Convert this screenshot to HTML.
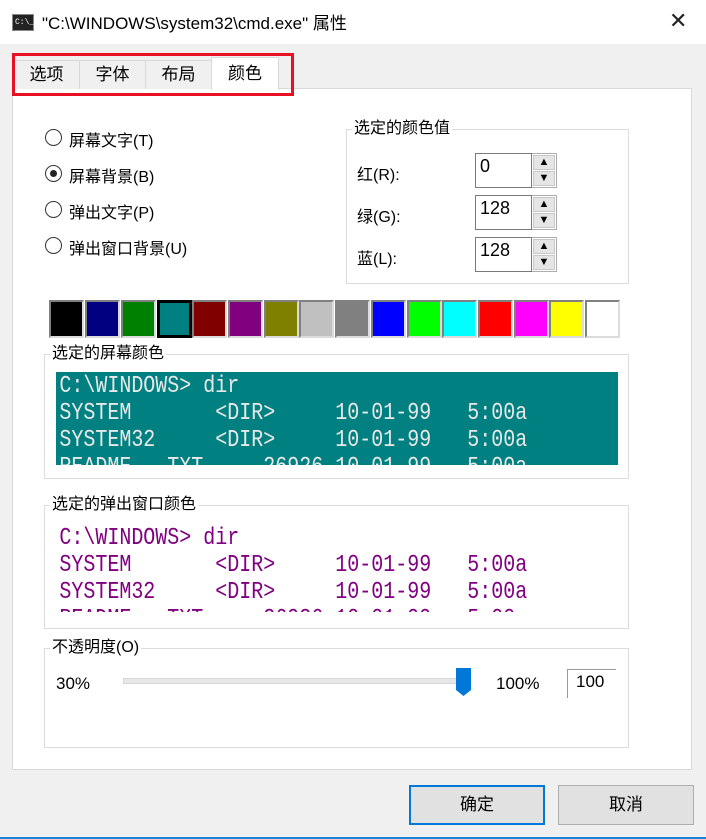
<!DOCTYPE html><html><head><meta charset="utf-8"><style>
*{margin:0;padding:0;box-sizing:border-box}
body{width:706px;height:839px;background:#f0f0f0;position:relative;overflow:hidden;font-family:"Liberation Sans","Noto Sans CJK SC",sans-serif;font-size:16px;color:#000}
.a{position:absolute}
.title{left:0;top:0;width:706px;height:44px;background:#fff}
.panel{left:12px;top:88px;width:680px;height:682px;background:#fff;border:1px solid #d9d9d9}
.tab{top:60px;height:29px;background:#f0f0f0;border:1px solid #d9d9d9;border-bottom:none;text-align:center;line-height:27px;font-size:17px}
.grp{border:1px solid #dcdcdc}
.gl{background:#fff;padding:0 2px;font-size:16px;line-height:20px}
.radio{width:17px;height:17px;border:1px solid #333;border-radius:50%;background:#fff}
.inp{width:57px;height:35px;border:1px solid #7a7a7a;background:#fff;font-size:18px;padding:2px 0 0 4px}
.sp{width:25px;height:35px;border:1px solid #adadad;border-left:none;background:#fff}
.sb{position:absolute;left:1px;width:22px;height:15px;background:#e5e5e5;border:1px solid #c8c8c8;font-size:11px;line-height:13px;text-align:center}
.cell{top:300px;width:35px;height:38px;border:2px solid;border-color:#808080 #dcdcdc #dcdcdc #808080}
.con{overflow:hidden}
.con div{font-family:"Liberation Mono",monospace;font-size:24px;line-height:27px;white-space:pre;transform:scaleX(0.833);transform-origin:0 0;padding-left:4px;margin-top:1px}
.btn{top:785px;width:136px;height:40px;background:#e1e1e1;border:1px solid #adadad;text-align:center;line-height:38px;font-size:17px}
</style></head><body>
<div class="a title"></div>
<div class="a" style="left:12px;top:14px;width:22px;height:17px;background:#222;border:1px solid #888;color:#fff;font-size:8px;line-height:15px;padding-left:2px;font-family:'Liberation Mono',monospace">C:\_</div>
<div class="a" style="left:42px;top:9px;font-size:17px">"C:\WINDOWS\system32\cmd.exe" 属性</div>
<div class="a" style="left:669px;top:8px;font-size:22px;color:#222;font-weight:300">✕</div>
<div class="a panel"></div>
<div class="a tab" style="left:13px;width:67px">选项</div>
<div class="a tab" style="left:79px;width:67px">字体</div>
<div class="a tab" style="left:145px;width:67px">布局</div>
<div class="a tab" style="left:211px;width:68px;top:57px;height:33px;background:#fff;line-height:31px">颜色</div>
<div class="a" style="left:12px;top:53px;width:282px;height:43px;border:3px solid #e81123"></div>

<div class="a radio" style="left:45px;top:129px"></div><div class="a" style="left:69px;top:127px">屏幕文字(T)</div>
<div class="a radio" style="left:45px;top:165px"></div><div class="a" style="left:50px;top:170px;width:7px;height:7px;border-radius:50%;background:#222"></div><div class="a" style="left:69px;top:163px">屏幕背景(B)</div>
<div class="a radio" style="left:45px;top:201px"></div><div class="a" style="left:69px;top:199px">弹出文字(P)</div>
<div class="a radio" style="left:45px;top:237px"></div><div class="a" style="left:69px;top:235px">弹出窗口背景(U)</div>

<div class="a grp" style="left:346px;top:129px;width:283px;height:155px"></div>
<div class="a gl" style="left:352px;top:119px">选定的颜色值</div>
<div class="a" style="left:357px;top:161px">红(R):</div>
<div class="a" style="left:357px;top:203px">绿(G):</div>
<div class="a" style="left:357px;top:245px">蓝(L):</div>
<div class="a inp" style="left:475px;top:153px">0</div><div class="a sp" style="left:532px;top:153px"><div class="sb" style="top:1px">▲</div><div class="sb" style="top:17px">▼</div></div>
<div class="a inp" style="left:475px;top:195px">128</div><div class="a sp" style="left:532px;top:195px"><div class="sb" style="top:1px">▲</div><div class="sb" style="top:17px">▼</div></div>
<div class="a inp" style="left:475px;top:237px">128</div><div class="a sp" style="left:532px;top:237px"><div class="sb" style="top:1px">▲</div><div class="sb" style="top:17px">▼</div></div>

<div class="a cell" style="left:49px;background:#000"></div>
<div class="a cell" style="left:85px;background:#000080"></div>
<div class="a cell" style="left:121px;background:#008000"></div>
<div class="a cell" style="left:157px;background:#008080;border:3px solid #000"></div>
<div class="a cell" style="left:192px;background:#800000"></div>
<div class="a cell" style="left:228px;background:#800080"></div>
<div class="a cell" style="left:264px;background:#808000"></div>
<div class="a cell" style="left:299px;background:#c0c0c0"></div>
<div class="a cell" style="left:335px;background:#808080"></div>
<div class="a cell" style="left:371px;background:#0000ff"></div>
<div class="a cell" style="left:407px;background:#00ff00"></div>
<div class="a cell" style="left:442px;background:#00ffff"></div>
<div class="a cell" style="left:478px;background:#ff0000"></div>
<div class="a cell" style="left:514px;background:#ff00ff"></div>
<div class="a cell" style="left:549px;background:#ffff00"></div>
<div class="a cell" style="left:585px;background:#fff;width:35px"></div>

<div class="a grp" style="left:44px;top:354px;width:585px;height:125px"></div>
<div class="a gl" style="left:50px;top:344px">选定的屏幕颜色</div>
<div class="a con" style="left:56px;top:372px;width:562px;height:93px;background:#008080;color:#e8e8e8"><div>C:\WINDOWS&gt; dir
SYSTEM       &lt;DIR&gt;     10-01-99   5:00a
SYSTEM32     &lt;DIR&gt;     10-01-99   5:00a
README   TXT     26926 10-01-99   5:00a</div></div>

<div class="a grp" style="left:44px;top:505px;width:585px;height:124px"></div>
<div class="a gl" style="left:50px;top:495px">选定的弹出窗口颜色</div>
<div class="a con" style="left:56px;top:524px;width:562px;height:88px;background:#fff;color:#800080"><div>C:\WINDOWS&gt; dir
SYSTEM       &lt;DIR&gt;     10-01-99   5:00a
SYSTEM32     &lt;DIR&gt;     10-01-99   5:00a
README   TXT     26926 10-01-99   5:00a</div></div>

<div class="a grp" style="left:44px;top:648px;width:585px;height:100px"></div>
<div class="a gl" style="left:50px;top:638px">不透明度(O)</div>
<div class="a" style="left:56px;top:674px;font-size:17px">30%</div>
<div class="a" style="left:123px;top:678px;width:340px;height:6px;background:#e7e7e7;border:1px solid #d6d6d6"></div>
<svg class="a" style="left:455px;top:668px" width="17" height="29"><path d="M1 0H16V22L8.5 28L1 22Z" fill="#0078d7"/></svg>
<div class="a" style="left:496px;top:674px;font-size:17px">100%</div>
<div class="a" style="left:567px;top:669px;width:49px;height:29px;border-top:1px solid #999;border-left:1px solid #999;font-size:17px;padding:2px 0 0 8px">100</div>

<div class="a btn" style="left:409px;border:2px solid #0078d7;line-height:36px">确定</div>
<div class="a btn" style="left:558px">取消</div>
<div class="a" style="left:0;top:837px;width:706px;height:2px;background:#1883d7"></div>
</body></html>
